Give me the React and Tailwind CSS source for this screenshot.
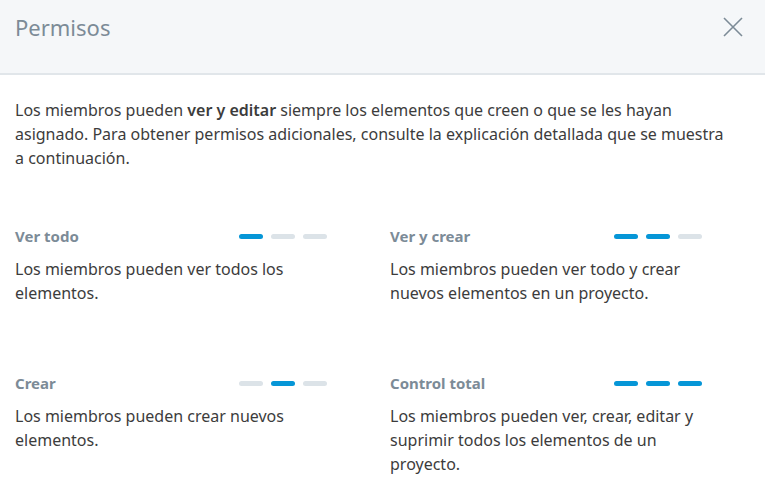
import React from 'react';

const levels = [
  {
    title: 'Ver todo',
    active: [true, false, false],
    text: 'Los miembros pueden ver todos los elementos.',
  },
  {
    title: 'Ver y crear',
    active: [true, true, false],
    text: 'Los miembros pueden ver todo y crear nuevos elementos en un proyecto.',
  },
  {
    title: 'Crear',
    active: [false, true, false],
    text: 'Los miembros pueden crear nuevos elementos.',
  },
  {
    title: 'Control total',
    active: [true, true, true],
    text: 'Los miembros pueden ver, crear, editar y suprimir todos los elementos de un proyecto.',
  },
];

const LevelBars = ({ active }) => (
  <div className="flex gap-2">
    {active.map((on, i) => (
      <span
        key={i}
        className={`block h-[5px] w-6 rounded-full ${on ? 'bg-[#0696d7]' : 'bg-[#dce3e8]'}`}
      />
    ))}
  </div>
);

const Level = ({ title, active, text }) => (
  <div>
    <div className="flex h-5 w-[312px] items-center justify-between">
      <h3 className="text-[15px] font-bold leading-5 text-[#7c8b97]">{title}</h3>
      <LevelBars active={active} />
    </div>
    <p className="mt-[11px] w-[325px] text-[16px] leading-6 text-[#3c3c3c]">{text}</p>
  </div>
);

export default function App() {
  return (
    <div className="min-h-screen w-[765px] bg-white font-['Noto_Sans',sans-serif]">
      <header className="flex h-[75px] items-start justify-between border-b-2 border-[#e1e6ea] bg-[#f5f7f9] pl-[15px] pr-[22px] pt-[11px]">
        <h2 className="text-[22px] leading-8 text-[#7c8b97]">Permisos</h2>
        <button className="mt-[6px] text-[#7c8b97]" aria-label="Cerrar">
          <svg width="20" height="20" viewBox="0 0 20 20" fill="none" stroke="currentColor" strokeWidth="1.6">
            <path d="M1 1l18 18M19 1L1 19" />
          </svg>
        </button>
      </header>

      <main className="px-[15px] pt-[23px]">
        <p className="w-[715px] text-[16px] leading-6 text-[#3c3c3c]">
          Los miembros pueden <strong className="font-semibold">ver y editar</strong> siempre los elementos que creen o que se les hayan
          asignado. Para obtener permisos adicionales, consulte la explicación detallada que se muestra a continuación.
        </p>

        <div className="mt-14 grid grid-cols-[375px_1fr] gap-y-[68px]">
          {levels.map((l) => (
            <Level key={l.title} {...l} />
          ))}
        </div>
      </main>
    </div>
  );
}
